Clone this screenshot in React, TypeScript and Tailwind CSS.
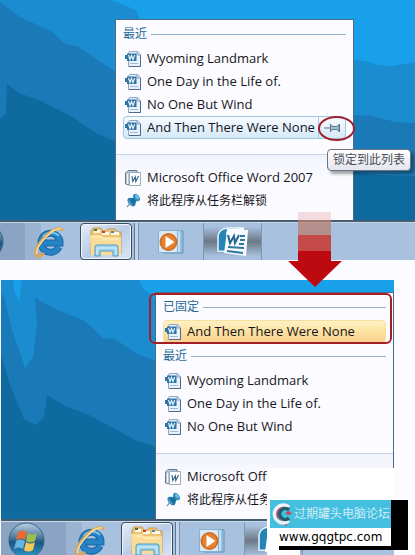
import clsx from "clsx";

const recent = ["Wyoming Landmark", "One Day in the Life of.", "No One But Wind"];
const pinnedDoc = "And Then There Were None";

export default function App() {
  return (
    <main className="w-full overflow-hidden bg-[#fcfbff] font-['Open_Sans','Noto_Sans_CJK_SC',sans-serif] text-[#16161c]">
      <section className="relative">
        <div className="relative">
          <Wallpaper />
          <div className="relative flex pt-[19px] pl-[115px]">
            <JumpList>
              <GroupTitle>最近</GroupTitle>
              {recent.map((name) => (
                <DocItem key={name} name={name} />
              ))}
              <DocItem name={pinnedDoc} state="hover" />
            </JumpList>
          </div>
        </div>
        <Taskbar shifted />

        <svg className="pointer-events-none absolute top-[115px] left-[316px]" width="40" height="27" viewBox="0 0 40 27" fill="none" aria-hidden="true">
          <ellipse cx="20.500" cy="13.500" rx="17.500" ry="11.500" stroke="#a01f2b" strokeWidth="2" />
        </svg>
        <div role="tooltip" className="absolute top-[149px] left-[327px] rounded-sm border border-[#6d7480] bg-linear-to-b from-white to-[#e3e5f0] px-[5px] text-xs leading-5 text-[#4d4d55] shadow-[3px_3px_3px_rgba(0,0,0,0.35)]">
          锁定到此列表
        </div>
        <svg className="pointer-events-none absolute top-[212px] left-[288px] z-20" width="54" height="75" viewBox="0 0 54 75" aria-hidden="true">
          <path fill="#c00b10" fillOpacity=".13" d="M10 0h33v8H10z" />
          <path fill="#b87f72" fillOpacity=".75" d="M10 8h33v15H10z" />
          <path fill="#c44a4a" d="M10 23h33v16H10z" />
          <path fill="#bd0a10" d="M10 39h33v10h11L27 75 0 49h10z" />
        </svg>
      </section>

      <section className="relative mt-5 pr-[21px] pl-px">
        <div className="relative">
          <Wallpaper second />
          <div className="relative flex justify-end pt-3">
            <JumpList>
              <GroupTitle>已固定</GroupTitle>
              <DocItem name={pinnedDoc} state="pinned" />
              <GroupTitle>最近</GroupTitle>
              {recent.map((name) => (
                <DocItem key={name} name={name} />
              ))}
            </JumpList>
          </div>
        </div>
        <Taskbar />
        <div className="pointer-events-none absolute top-[13px] left-[149px] h-[51px] w-[243px] rounded-md border-2 border-[#a41e27]" />
        <Watermark />
      </section>
    </main>
  );
}

function JumpList({ children }: { children: React.ReactNode }) {
  return (
    <nav className="w-[239px] border border-b-0 border-[#4d6c88] bg-[#fcfbff]">
      <div className="pt-px pb-[15px]">{children}</div>
      <div className="border-t border-[#c3d3e8] bg-linear-to-b from-[#f1f4fc] to-[#fbfbff] to-40% pt-[11px] pb-2">
        <button type="button" className="mx-[7px] flex h-[23px] items-center gap-1.5 pl-0.5 text-[13px] whitespace-nowrap">
          <WordAppIcon />
          Microsoft Office Word 2007
        </button>
        <button type="button" className="mx-[7px] flex h-[23px] items-center gap-1.5 pl-0.5 text-xs whitespace-nowrap">
          <PinIcon />
          将此程序从任务栏解锁
        </button>
      </div>
    </nav>
  );
}

function GroupTitle({ children }: { children: React.ReactNode }) {
  return (
    <h2 className="mx-[7px] flex h-[26px] items-center gap-1 text-xs text-[#286a96]">
      {children}
      <span className="h-px flex-1 bg-[#8fb0c8]" />
    </h2>
  );
}

function DocItem({ name, state }: { name: string; state?: "hover" | "pinned" }) {
  return (
    <div
      className={clsx(
        "mx-[7px] flex h-[23px] border",
        !state && "border-transparent",
        state === "hover" && "rounded-sm border-[#9fc6dc] bg-linear-to-b from-[#f7fbff] to-[#d5e9f8]",
        state === "pinned" && "rounded-sm border-[#f6dda0] bg-linear-to-b from-[#fff1c4] via-[#fde2a0] to-[#f8cf8e]"
      )}
    >
      <button type="button" className="flex flex-1 items-center gap-1.5 pl-px text-[13px] whitespace-nowrap">
        <DocIcon />
        {name}
      </button>
      {state === "hover" && (
        <button type="button" aria-label="锁定到此列表" className="flex w-[27px] items-center justify-center border-l border-[#a9c9de]">
          <svg width="17" height="10" viewBox="0 0 17 10" fill="#a9bccb" stroke="#5c7488" aria-hidden="true">
            <path d="M0 5h6M6.500 1v8M7 2.500l2 1h4l2-2v7l-2-2H9l-2 1M15.500 1v8" />
          </svg>
        </button>
      )}
    </div>
  );
}

function Taskbar({ shifted = false }: { shifted?: boolean }) {
  return (
    <div className={clsx("overflow-hidden border-t-2 border-[#465d70] bg-[#a7c1df]", shifted ? "h-10" : "h-9")}>
      <div className={clsx("flex h-[38px] border-t border-[#c6d9ec]", shifted && "-ml-10")}>
        <button type="button" aria-label="Start" className="flex w-[65px] shrink-0 items-start bg-[#8ba4c4] pl-[7px]">
          <OrbIcon />
        </button>
        <button type="button" aria-label="Internet Explorer" className="mr-2 flex w-[47px] shrink-0 items-center justify-center bg-linear-to-r from-[#9bb4d2] from-35% to-[#a7c1df] to-35%">
          <IeIcon />
        </button>
        <button type="button" aria-label="Explorer" className="flex w-[52px] shrink-0 items-center justify-center rounded-sm border border-[#3c4b5e] bg-linear-to-br from-[#e6edf8] via-[#b9cce6] to-[#dbe6f5] shadow-[inset_0_0_0_1px_#eef4fb]">
          <FolderIcon />
        </button>
        <span className="w-[3px] shrink-0 border-r border-[#5d7590]" />
        <span className="w-1 shrink-0 border-r border-[#7890ac] bg-[#c3d5ea]" />
        <button type="button" aria-label="Media Player" className="flex w-16 shrink-0 items-center justify-center">
          <MediaIcon />
        </button>
        <button type="button" aria-label="Word" className="flex w-[59px] shrink-0 items-center justify-center border-x border-[#8296ab] bg-linear-to-b from-[#a7c1df] from-10% via-[#6d7987] to-[#a7c1df] to-90%">
          <WordIcon />
        </button>
      </div>
    </div>
  );
}

function Watermark() {
  return (
    <div className="absolute right-0 bottom-0 left-[267px] z-10 h-[87px]">
      <div className="mr-[21px] h-full bg-white [clip-path:polygon(0_0,100%_0,100%_94%,26%_94%,26%_100%,0_100%)]" />
      <div className="absolute top-8 left-3 h-[50px] w-[129px] bg-black" />
      <div className="absolute top-8 left-0 w-[124px] bg-white">
        <p className="ml-[3px] flex h-7 items-center bg-[#45bfdf] text-xs font-light whitespace-nowrap text-white">
          <svg className="shrink-0" width="24" height="26" viewBox="0 0 24 26" fill="none" aria-hidden="true">
            <path d="M15 4A9.500 9.500 0 1 0 17 23" stroke="#a84b7c" strokeWidth="3" />
            <path d="M19 6A9 9 0 1 0 19 20" stroke="#edf3f5" strokeWidth="3.500" />
            <path d="M19 9A5.500 5.500 0 1 0 19 17" stroke="#265b68" strokeWidth="3.500" />
            <path d="M16 11l4-1 2 3-3 1-3-1z" fill="#c34c63" />
          </svg>
          过期罐头电脑论坛
        </p>
        <p className="h-[18px] pl-3 font-['DejaVu_Sans'] text-xs leading-[18px] text-black">
          <a href="http://www.gqgtpc.com">www.gqgtpc.com</a>
        </p>
      </div>
    </div>
  );
}

function Wallpaper({ second = false }: { second?: boolean }) {
  if (second) {
    return (
      <svg className="absolute inset-0 h-full w-full" viewBox="0 0 393 239" preserveAspectRatio="none" aria-hidden="true">
        <path fill="#18a0ea" d="M0 0h393v239H0z" />
        <path fill="#1a8ccf" d="M0 0h138l5 10 8 5 4 8v216H0z" />
        <path fill="#1a7ab8" d="M0 14l3 2 8 34 13 38 8-11 4-32-2-27 18 10 32 13 18 17 12 1 22 15 20 7v158H0z" />
        <path fill="#18a0ea" d="M12 0h9l-3 22-4-9z" />
        <path fill="#0f6a9f" d="M0 75l9 30 14 34 12 6 8-8 3-22 18 11 22 8 28 15 20 11 21 7v72H0z" />
      </svg>
    );
  }
  return (
    <svg className="absolute inset-0 h-full w-full" viewBox="0 0 415 220" preserveAspectRatio="none" aria-hidden="true">
      <path fill="#18a0ea" d="M0 0h415v220H0z" />
      <path fill="#1a8ccf" d="M0 0h112l14 6 10 4 4 10 210 39 15 2 13 4 15 1 22-4v158H0z" />
      <path fill="#1a7ab8" d="M0 2l20 15 31 14 14 13 12 2 22 15 20 13 234 41 18 1 25 6 19 1v97H0z" />
      <path fill="#0f6a9f" d="M0 119l6-6 1-29 12 9 22 8 30 15 25 17 19 8 238 31 22 3 40 1v44H0z" />
    </svg>
  );
}

function DocIcon() {
  return (
    <svg className="shrink-0" width="16" height="16" viewBox="0 0 16 16" aria-hidden="true">
      <path d="M3.500 1.500 5 .5h7.500l3 3v12h-12z" fill="#e9f1fa" stroke="#8ea6c6" />
      <path d="M12 .5V4h3.500" fill="#c9d9ea" stroke="#8ea6c6" />
      <path d="M15.500 4v11.500H4" fill="none" stroke="#52698f" />
      <path d="M5 12.500h8" stroke="#a3b9d6" />
      <path d="M0 4h2V2.500h9.500V10H2V8H0z" fill="#2f74a6" />
      <path d="M3.500 4 5 8.500 6.500 4.500 8 8.500 9.700 4" fill="none" stroke="#e8f3fb" strokeWidth="1.200" />
    </svg>
  );
}

function WordAppIcon() {
  return (
    <svg className="shrink-0" width="16" height="16" viewBox="0 0 16 16" aria-hidden="true">
      <path d="M.5 14V3L3 .5h9V3H5v12z" fill="#b8c7d6" stroke="#66798e" />
      <path d="M2.500 14V4" stroke="#f4f7fa" />
      <path d="M4.500 2.500h11v13h-11z" fill="#fff" stroke="#9dabbb" />
      <path d="m7 6 .8 5.500L10.300 7l.5 4.500L13.500 6" fill="none" stroke="#35658c" strokeWidth="1.200" />
    </svg>
  );
}

function PinIcon() {
  return (
    <svg className="shrink-0" width="16" height="16" viewBox="0 0 16 16" aria-hidden="true">
      <path d="m6 9-4 5" stroke="#687b88" strokeWidth="1.200" />
      <ellipse cx="6.500" cy="9" rx="3.200" ry="5" transform="rotate(-40 6.500 9)" fill="#237eae" />
      <path d="m5 7 5-4 3 3-4 6z" fill="#1b6f9e" />
      <ellipse cx="11.500" cy="4.500" rx="2.700" ry="4.200" transform="rotate(-40 11.500 4.500)" fill="#2c91c4" />
      <ellipse cx="12" cy="4" rx="1.300" ry="2.500" transform="rotate(-40 12 4)" fill="#77c1e5" />
      <path d="M4 7.500c0 2 1 3.500 3 4.500" fill="none" stroke="#7cc3e4" />
    </svg>
  );
}

function OrbIcon() {
  return (
    <svg className="shrink-0" width="37" height="37" viewBox="0 0 37 37" aria-hidden="true">
      <defs>
        <linearGradient id="orb" x1="0" y1="0" x2="0" y2="1">
          <stop offset="0" stopColor="#b9d0e2" />
          <stop offset=".4" stopColor="#517da1" />
          <stop offset=".55" stopColor="#1c5583" />
          <stop offset="1" stopColor="#2e9ccb" />
        </linearGradient>
      </defs>
      <circle cx="18.500" cy="18.500" r="17.500" fill="url(#orb)" stroke="#376385" />
      <path d="M10 10c3-2 6-2 9 0l-2 8c-3-2-6-2-9 0z" fill="#e76b35" />
      <path d="M20 11c3 2 6 2 9 0l-2 8c-3 2-6 2-9 0z" fill="#9dbf50" />
      <path d="M8 19c3-2 6-2 9 0l-2 8c-3-2-6-2-9 0z" fill="#67b3e2" />
      <path d="M18 20c3 2 6 2 9 0l-2 8c-3 2-6 2-9 0z" fill="#f4c957" />
    </svg>
  );
}

function IeIcon() {
  return (
    <svg className="shrink-0" width="32" height="32" viewBox="0 0 32 32" fill="none" aria-hidden="true">
      <path d="M26 21A9.500 9.500 0 1 1 27 17H11" stroke="#1b65a1" strokeWidth="7" />
      <path d="M26 21A9.500 9.500 0 1 1 27 17H11" stroke="#2683c6" strokeWidth="5" />
      <path d="M10 11c3-5 12-6 16-1" stroke="#73c4ec" strokeWidth="2" />
      <path d="M29 5c0-4-8-3-15 4C5 17 0 27 4 30c2 1 5-1 7-3" stroke="#dba553" strokeWidth="3" />
      <path d="M28 3c-4-1-9 2-14 7C7 17 2 25 4 28" stroke="#f9dda0" strokeWidth="1.500" />
    </svg>
  );
}

function FolderIcon() {
  return (
    <svg className="shrink-0" width="34" height="30" viewBox="0 0 34 30" aria-hidden="true">
      <path d="M2 4 4 1h8l2 3h3l2-2h7l2 3h4v22H2z" fill="#edc476" stroke="#c69a4d" />
      <path d="M5 3h6v3H5zM13 5h7v3h-7zM22 5h8v3h-8z" fill="#fff8e4" />
      <path d="M5 2h3v2H5z" fill="#477348" />
      <path d="M13 4h3v2h-3z" fill="#cf3f35" />
      <path d="M22 4h3v2h-3z" fill="#4d82ab" />
      <path d="M1 8h11l2 2h18v18H2z" fill="#f8dc98" />
      <path d="M3 10h9l2 2h16" fill="none" stroke="#fff1c5" />
      <path d="M6 29V20q0-2 2-2h19q2 0 2 2v9h-5v-5H11v5z" fill="#9dd3ef" stroke="#529dc6" />
      <path d="M8 28v-7h19v7" fill="none" stroke="#e0f4fd" />
    </svg>
  );
}

function MediaIcon() {
  return (
    <svg className="shrink-0" width="26" height="24" viewBox="0 0 26 24" aria-hidden="true">
      <path d="M5 1h20v22H5z" fill="#a2c7e4" stroke="#5995c0" />
      <path d="M3 .5h20v22H3z" fill="#c7dff0" stroke="#71a7cc" />
      <path d="M.5.500h19v22H.500z" fill="#d8e9f4" stroke="#84b2d3" />
      <circle cx="10.500" cy="12" r="9" fill="#e48132" />
      <circle cx="10.500" cy="12" r="8" fill="none" stroke="#c8601e" />
      <path d="m7.500 6 9 6-9 6z" fill="#fff" />
    </svg>
  );
}

function WordIcon() {
  return (
    <svg className="shrink-0" width="32" height="30" viewBox="0 0 32 30" aria-hidden="true">
      <path d="M1 24V9C2 3 6 1 12 1h14v24z" fill="#2386b7" stroke="#e9f5fb" strokeWidth="1.500" />
      <path d="M10 2 27 1v7H9z" fill="#f8fcff" />
      <path d="m10 4 21-1-2 26-22-3z" fill="#f7fbff" />
      <path d="m11 8 2 8 4-7 1 7 4-8" fill="none" stroke="#23668e" strokeWidth="2" />
      <path d="M23 9h5M23 13h5M22 17h5M11 20l16 1M10 24l16 2" stroke="#2c789f" strokeWidth="2" />
    </svg>
  );
}
